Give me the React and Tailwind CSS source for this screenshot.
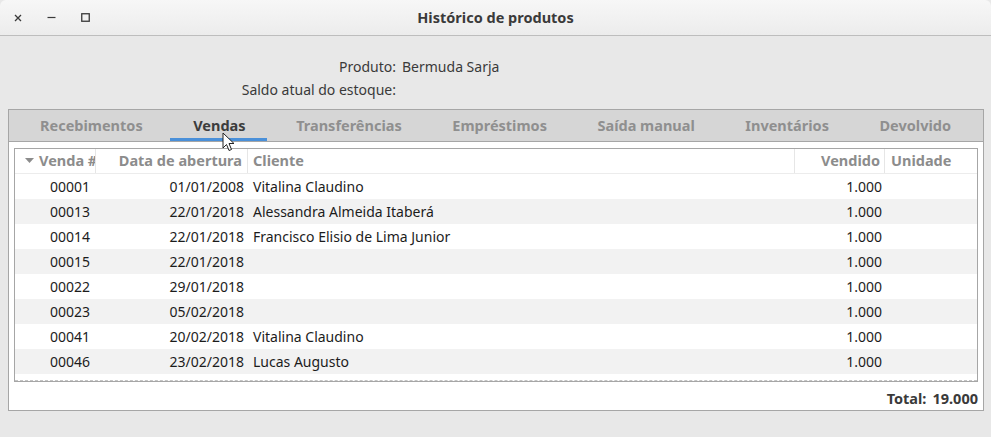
import React from "react";

const rows = [
  ["00001", "01/01/2008", "Vitalina Claudino", "1.000"],
  ["00013", "22/01/2018", "Alessandra Almeida Itaberá", "1.000"],
  ["00014", "22/01/2018", "Francisco Elisio de Lima Junior", "1.000"],
  ["00015", "22/01/2018", "", "1.000"],
  ["00022", "29/01/2018", "", "1.000"],
  ["00023", "05/02/2018", "", "1.000"],
  ["00041", "20/02/2018", "Vitalina Claudino", "1.000"],
  ["00046", "23/02/2018", "Lucas Augusto", "1.000"],
];

const tabs = [
  "Recebimentos",
  "Vendas",
  "Transferências",
  "Empréstimos",
  "Saída manual",
  "Inventários",
  "Devolvido",
];

const cols = "grid-cols-[81px_152px_547px_90px_1fr]";

export default function App() {
  return (
    <div className="w-[991px] h-[437px] bg-[#e8e8e8] flex flex-col font-['Noto_Sans',sans-serif] text-[14px] text-[#1c1c1c] overflow-hidden">
      {/* Title bar */}
      <div className="h-[36px] shrink-0 grid grid-cols-[1fr_auto_1fr] items-center bg-gradient-to-b from-[#f7f7f7] to-[#ececec] border-b border-[#bdbdbd] rounded-t-[6px]">
        <div className="flex items-center pl-[13px]">
          <div className="w-[10px] h-[10px] flex items-center justify-center">
            <svg width="8" height="8" viewBox="0 0 8 8">
              <path d="M1 1L7 7M7 1L1 7" stroke="#3a3a3a" strokeWidth="1.3" />
            </svg>
          </div>
          <div className="ml-[23px] w-[10px] h-[10px] flex items-center justify-center">
            <svg width="9" height="9" viewBox="0 0 9 9">
              <path d="M0.5 4.5H8.5" stroke="#3a3a3a" strokeWidth="1.2" />
            </svg>
          </div>
          <div className="ml-[24px] w-[10px] h-[10px] flex items-center justify-center">
            <svg width="9" height="9" viewBox="0 0 9 9">
              <rect x="0.75" y="0.75" width="7.5" height="7.5" fill="none" stroke="#3a3a3a" strokeWidth="1.3" />
            </svg>
          </div>
        </div>
        <div className="font-bold text-[14.5px] text-[#3a3a3a]">Histórico de produtos</div>
        <div />
      </div>

      {/* Form */}
      <div className="grid grid-cols-[396px_1fr] gap-x-[6px] pt-[19px] leading-[23px] text-[#3a3a3a]">
        <div className="text-right">Produto:</div>
        <div>Bermuda Sarja</div>
        <div className="text-right">Saldo atual do estoque:</div>
        <div />
      </div>

      {/* Panel */}
      <div className="ml-[8px] mt-[8px] w-[976px] h-[302px] border border-[#a6a6a6] bg-white flex flex-col">
        <div className="h-[32px] shrink-0 bg-[#d6d6d6] border-b border-[#a6a6a6] flex items-center justify-between pl-[31px] pr-[32px] text-[14.5px]">
          {tabs.map((t) => (
            <div
              key={t}
              className={
                "relative font-bold h-full flex items-center " +
                (t === "Vendas" ? "text-[#3c3c3c]" : "text-[#8f8f8f]")
              }
            >
              {t}
              {t === "Vendas" && (
                <>
                  <div className="absolute left-[-23px] right-[-21px] bottom-[0px] h-[3px] bg-[#4a90d9]" />
                  <svg className="absolute left-[29px] top-[22px]" width="13" height="20" viewBox="0 0 13 20">
                    <path d="M1 1V16L4.5 12.5L7 18.5L9.5 17.5L7 11.5H12Z" fill="white" stroke="#222" strokeWidth="1" strokeLinejoin="round" />
                  </svg>
                </>
              )}
            </div>
          ))}
        </div>

        <div className="px-[5px] pt-[6px] flex flex-col flex-1">
          <div className="h-[234px] border border-[#a6a6a6] flex flex-col overflow-hidden">
            {/* Header */}
            <div className={"grid " + cols + " h-[25px] shrink-0 border-b border-[#ececec] font-bold text-[#8c8c8c] text-[14.5px]"}>
              <div className="flex items-center border-r border-[#e6e6e6] overflow-hidden whitespace-nowrap pl-[10px]">
                <svg width="9" height="6" viewBox="0 0 9 6" className="mr-[5px] shrink-0">
                  <path d="M0 0H9L4.5 5Z" fill="#8c8c8c" />
                </svg>
                Venda #
              </div>
              <div className="flex items-center justify-end pr-[5px] border-r border-[#e6e6e6] whitespace-nowrap">Data de abertura</div>
              <div className="flex items-center pl-[5px] border-r border-[#e6e6e6]">Cliente</div>
              <div className="flex items-center justify-end pr-[4px] border-r border-[#e6e6e6]">Vendido</div>
              <div className="flex items-center pl-[6px]">Unidade</div>
            </div>
            {/* Rows */}
            <div className="flex-1 overflow-hidden relative">
              {rows.map((r, i) => (
                <div
                  key={r[0]}
                  className={"grid " + cols + " h-[25px] items-center " + (i % 2 ? "bg-[#f2f2f2]" : "bg-white")}
                >
                  <div className="text-right pr-[6px]">{r[0]}</div>
                  <div className="text-right pr-[4px]">{r[1]}</div>
                  <div className="pl-[5px]">{r[2]}</div>
                  <div className="text-right pr-[3px]">{r[3]}</div>
                  <div />
                </div>
              ))}
              <div className="mt-[6px] border-t border-dashed border-[#c4c4c4]" />
            </div>
          </div>
          <div className="flex justify-end gap-[6px] pt-[6px] font-bold text-[14.5px] text-[#3a3a3a]">
            <span>Total:</span>
            <span>19.000</span>
          </div>
        </div>
      </div>
    </div>
  );
}
